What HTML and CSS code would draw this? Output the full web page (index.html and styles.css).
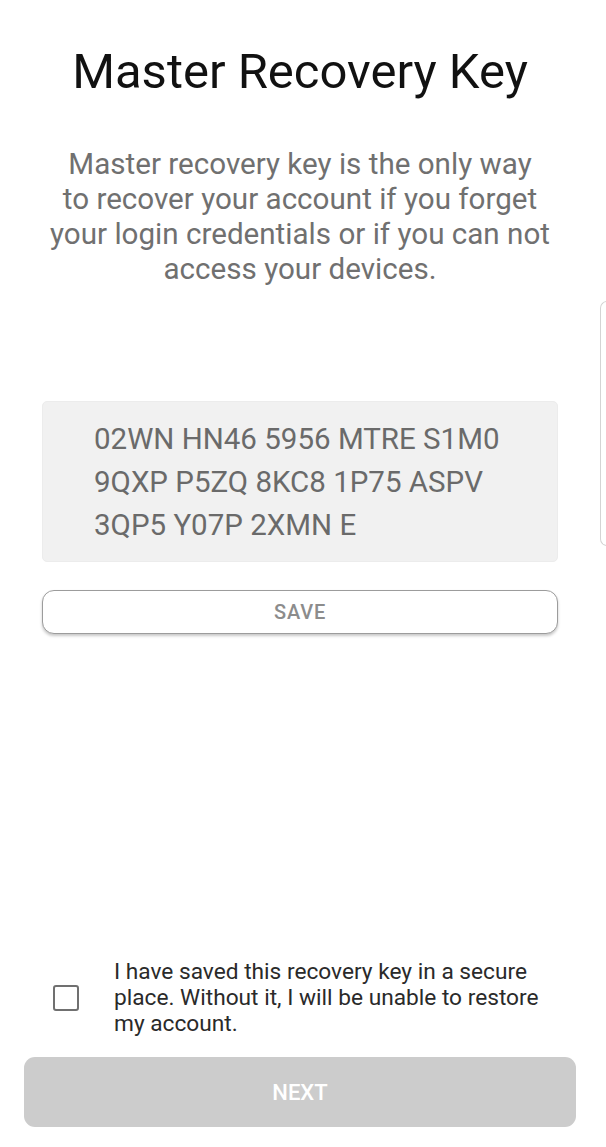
FILE: index.html
```html
<!DOCTYPE html>
<html lang="en">
<head>
<meta charset="utf-8">
<title>Master Recovery Key</title>
<link rel="stylesheet" href="styles.css">
</head>
<body>
<div class="screen">
  <h1 class="title">Master Recovery Key</h1>
  <p class="intro">Master recovery key is the only way<br>to recover your account if you forget<br>your login credentials or if you can not<br>access your devices.</p>
  <div class="key-box">
    <div class="key-line">02WN HN46 5956 MTRE S1M0</div>
    <div class="key-line">9QXP P5ZQ 8KC8 1P75 ASPV</div>
    <div class="key-line">3QP5 Y07P 2XMN E</div>
  </div>
  <button class="save-btn" type="button">SAVE</button>
  <div class="spacer"></div>
  <label class="confirm">
    <span class="checkbox"></span>
    <span class="confirm-text">I have saved this recovery key in a secure place. Without it, I will be unable to restore my account.</span>
  </label>
  <button class="next-btn" type="button">NEXT</button>
  <div class="edge-handle"></div>
</div>
</body>
</html>
```
FILE: styles.css
```css
html, body {
  margin: 0;
  padding: 0;
  background: #ffffff;
}

body {
  font-family: Roboto, "Liberation Sans", Arial, sans-serif;
  overflow: hidden;
}

.screen {
  position: relative;
  width: 600px;
  height: 1147px;
  display: flex;
  flex-direction: column;
  box-sizing: border-box;
  padding-top: 43px;
  padding-bottom: 20px;
}

.title {
  margin: 0;
  font-size: 49px;
  font-weight: 400;
  line-height: 58px;
  color: #111111;
  text-align: center;
}

.intro {
  margin: 46px 0 0;
  font-size: 29.6px;
  line-height: 35px;
  color: #707070;
  text-align: center;
}

.key-box {
  margin: 114px 42px 0;
  padding: 16px 20px 15px 51px;
  background: #f1f1f1;
  border: 1px solid #ececec;
  border-radius: 5px;
  box-sizing: border-box;
  height: 161px;
}

.key-line {
  font-size: 29.5px;
  line-height: 43px;
  color: #6a6a6a;
  white-space: nowrap;
}

.save-btn {
  margin: 28px 42px 0;
  height: 44px;
  background: #ffffff;
  border: 1.5px solid #9c9c9c;
  border-radius: 12px;
  box-shadow: 0 2px 3px rgba(0, 0, 0, 0.22);
  font-family: Roboto, "Liberation Sans", Arial, sans-serif;
  font-size: 20px;
  font-weight: 500;
  letter-spacing: 0.8px;
  color: #8c8c8c;
  padding: 0;
}

.spacer {
  flex: 1;
}

.confirm {
  display: flex;
  align-items: center;
  padding-left: 53px;
  padding-right: 45px;
  gap: 35px;
}

.checkbox {
  flex: none;
  width: 26px;
  height: 26px;
  box-sizing: border-box;
  border: 2.5px solid #707070;
  border-radius: 3px;
}

.confirm-text {
  font-size: 22.7px;
  line-height: 26px;
  color: #2a2a2a;
}

.next-btn {
  margin: 20px 24px 0;
  height: 70px;
  background: #cccccc;
  border: none;
  border-radius: 11px;
  font-family: Roboto, "Liberation Sans", Arial, sans-serif;
  font-size: 22px;
  font-weight: 500;
  color: #ffffff;
  padding: 0;
}

.edge-handle {
  position: absolute;
  left: 600px;
  top: 301px;
  width: 10px;
  height: 245px;
  box-sizing: border-box;
  border: 1.5px solid #d4d4d4;
  border-right: none;
  border-radius: 7px 0 0 7px;
}
```
